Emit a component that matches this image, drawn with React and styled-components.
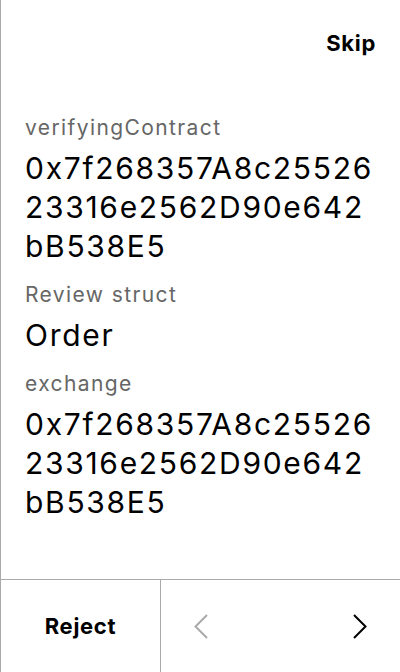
import styled, { createGlobalStyle } from "styled-components";

const GlobalStyle = createGlobalStyle`
  html, body {
    margin: 0;
    padding: 0;
    background: #ffffff;
  }
  body {
    font-family: Inter, "Noto Sans", "Liberation Sans", sans-serif;
    color: #000;
  }
`;

const Screen = styled.div`
  display: flex;
  flex-direction: column;
  width: 400px;
  height: 672px;
  box-sizing: border-box;
  border-left: 1px solid #aaaaaa;
  background: #fff;
`;

const Header = styled.div`
  display: flex;
  justify-content: flex-end;
  padding: 30px 24px 0;
`;

const TextButton = styled.button`
  border: none;
  background: none;
  padding: 0;
  font-family: inherit;
  font-size: 22px;
  line-height: 26px;
  font-weight: 700;
  letter-spacing: 0.7px;
  color: #000;
  cursor: pointer;
`;

const Body = styled.div`
  flex: 1;
  padding: 58px 24px 0;
  overflow: hidden;
`;

const Field = styled.div`
  & + & {
    margin-top: 15px;
  }
`;

const Label = styled.div`
  font-size: 21px;
  line-height: 28px;
  letter-spacing: 1.4px;
  color: #666666;
`;

const Value = styled.div`
  margin-top: 7px;
  font-size: 30px;
  line-height: 39px;
  letter-spacing: 1.7px;
  color: #000;
  word-break: break-all;
`;

const Footer = styled.div`
  display: flex;
  height: 92px;
  flex-shrink: 0;
  border-top: 1px solid #aaaaaa;
`;

const RejectButton = styled(TextButton)`
  width: 160px;
  border-right: 1px solid #aaaaaa;
  display: flex;
  align-items: center;
  justify-content: center;
`;

const Nav = styled.div`
  flex: 1;
  display: flex;
  justify-content: space-between;
  align-items: center;
`;

const NavButton = styled.button`
  width: 80px;
  height: 100%;
  border: none;
  background: none;
  padding: 0;
  display: flex;
  align-items: center;
  justify-content: center;
  color: ${(p) => (p.disabled ? "#aaaaaa" : "#000000")};
  cursor: ${(p) => (p.disabled ? "default" : "pointer")};
`;

const Chevron = ({ dir }) => (
  <svg width="14" height="25" viewBox="0 0 14 25" fill="none">
    <polyline
      points={dir === "left" ? "13,1 1.5,12.5 13,24" : "1,1 12.5,12.5 1,24"}
      stroke="currentColor"
      strokeWidth="2"
    />
  </svg>
);

const fields = [
  { label: "verifyingContract", value: "0x7f268357A8c2552623316e2562D90e642bB538E5" },
  { label: "Review struct", value: "Order" },
  { label: "exchange", value: "0x7f268357A8c2552623316e2562D90e642bB538E5" },
];

export default function App() {
  return (
    <>
      <GlobalStyle />
      <Screen>
        <Header>
          <TextButton>Skip</TextButton>
        </Header>
        <Body>
          {fields.map((f) => (
            <Field key={f.label}>
              <Label>{f.label}</Label>
              <Value>{f.value}</Value>
            </Field>
          ))}
        </Body>
        <Footer>
          <RejectButton>Reject</RejectButton>
          <Nav>
            <NavButton disabled>
              <Chevron dir="left" />
            </NavButton>
            <NavButton>
              <Chevron dir="right" />
            </NavButton>
          </Nav>
        </Footer>
      </Screen>
    </>
  );
}
